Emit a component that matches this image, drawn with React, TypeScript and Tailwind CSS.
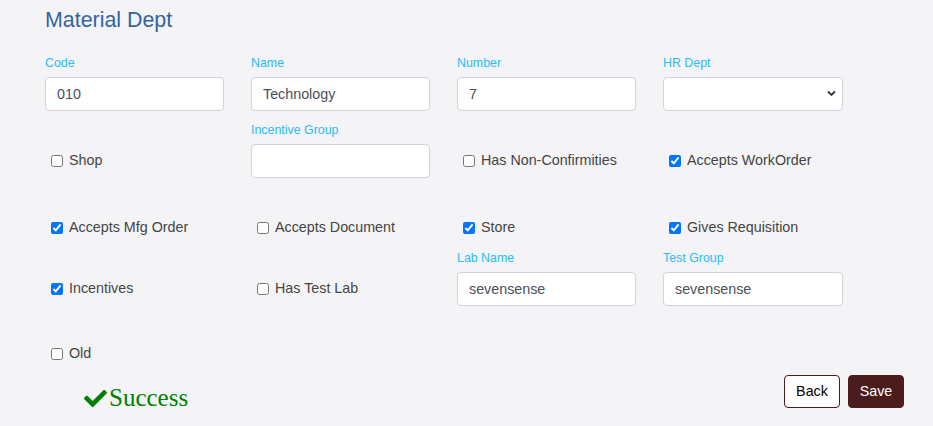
import { FaCheck } from "react-icons/fa";

type Field =
  | { kind: "input"; label: string; value: string }
  | { kind: "select"; label: string }
  | { kind: "check"; label: string; checked: boolean }
  | { kind: "empty" };

const ROWS: { gap: string; cells: Field[] }[] = [
  {
    gap: "mt-0",
    cells: [
      { kind: "input", label: "Code", value: "010" },
      { kind: "input", label: "Name", value: "Technology" },
      { kind: "input", label: "Number", value: "7" },
      { kind: "select", label: "HR Dept" },
    ],
  },
  {
    gap: "mt-[11px]",
    cells: [
      { kind: "check", label: "Shop", checked: false },
      { kind: "input", label: "Incentive Group", value: "" },
      { kind: "check", label: "Has Non-Confirmities", checked: false },
      { kind: "check", label: "Accepts WorkOrder", checked: true },
    ],
  },
  {
    gap: "mt-[11px]",
    cells: [
      { kind: "check", label: "Accepts Mfg Order", checked: true },
      { kind: "check", label: "Accepts Document", checked: false },
      { kind: "check", label: "Store", checked: true },
      { kind: "check", label: "Gives Requisition", checked: true },
    ],
  },
  {
    gap: "mt-[5px]",
    cells: [
      { kind: "check", label: "Incentives", checked: true },
      { kind: "check", label: "Has Test Lab", checked: false },
      { kind: "input", label: "Lab Name", value: "sevensense" },
      { kind: "input", label: "Test Group", value: "sevensense" },
    ],
  },
  {
    gap: "mt-[9px]",
    cells: [{ kind: "check", label: "Old", checked: false }, { kind: "empty" }, { kind: "empty" }, { kind: "empty" }],
  },
];

const boxCls =
  "w-full h-[34px] rounded-[4px] border border-[#ced4da] bg-white px-[11px] text-[14.3px] text-[#495057] outline-none";

function Cell({ f }: { f: Field }) {
  if (f.kind === "empty") return <div />;
  if (f.kind === "check") {
    return (
      <div className="flex flex-col">
        <div className="h-[22px]" />
        <label className="flex h-[34px] items-center gap-[6px] pl-[6px] text-[14.3px] text-[#444]">
          <input type="checkbox" defaultChecked={f.checked} className="m-0 h-[12px] w-[12px] accent-[#0075ff]" />
          <span>{f.label}</span>
        </label>
      </div>
    );
  }
  return (
    <div className="flex flex-col">
      <span className="mb-[6px] text-[12.4px] leading-4 text-[#29bdf3]">{f.label}</span>
      {f.kind === "input" ? (
        <input type="text" defaultValue={f.value} className={boxCls} />
      ) : (
        <div className="relative">
          <select className={`${boxCls} appearance-none`} defaultValue="">
            <option value=""></option>
          </select>
          <svg
            className="pointer-events-none absolute right-[7px] top-[13px]"
            width="9"
            height="7"
            viewBox="0 0 9 7"
          >
            <path d="M1 1.5 L4.5 5 L8 1.5" fill="none" stroke="#343a40" strokeWidth="1.8" />
          </svg>
        </div>
      )}
    </div>
  );
}

export default function App() {
  return (
    <div
      className="min-h-[426px] w-full bg-[#f4f4f7] pl-[45px] pr-[29px] pt-[7px]"
      style={{ fontFamily: '"Liberation Sans", Arial, sans-serif' }}
    >
      <h1 className="text-[21.4px] leading-[26px] text-[#33649f]">Material Dept</h1>

      <div className="mt-[22px]">
        {ROWS.map((row, i) => (
          <div key={i} className={`grid grid-cols-[179px_179px_179px_180px] gap-x-[27px] ${row.gap}`}>
            {row.cells.map((c, j) => (
              <Cell key={j} f={c} />
            ))}
          </div>
        ))}
      </div>

      <div className="mt-[4px] flex items-start justify-between">
        <div className="mt-[8px] flex items-center gap-[2px] pl-[39px] text-[#008000]">
          <FaCheck className="h-[23px] w-[23px]" />
          <span className="text-[25px] leading-[30px]" style={{ fontFamily: '"Liberation Serif", "Times New Roman", serif' }}>
            Success
          </span>
        </div>
        <div className="flex gap-[8px]">
          <button className="h-[33px] w-[56px] rounded-[4px] border border-[#4a1c1c] bg-white text-[14.3px] text-black">
            Back
          </button>
          <button className="h-[33px] w-[56px] rounded-[4px] border border-[#4a1c1c] bg-[#4a1c1c] text-[14.3px] text-white">
            Save
          </button>
        </div>
      </div>
    </div>
  );
}
